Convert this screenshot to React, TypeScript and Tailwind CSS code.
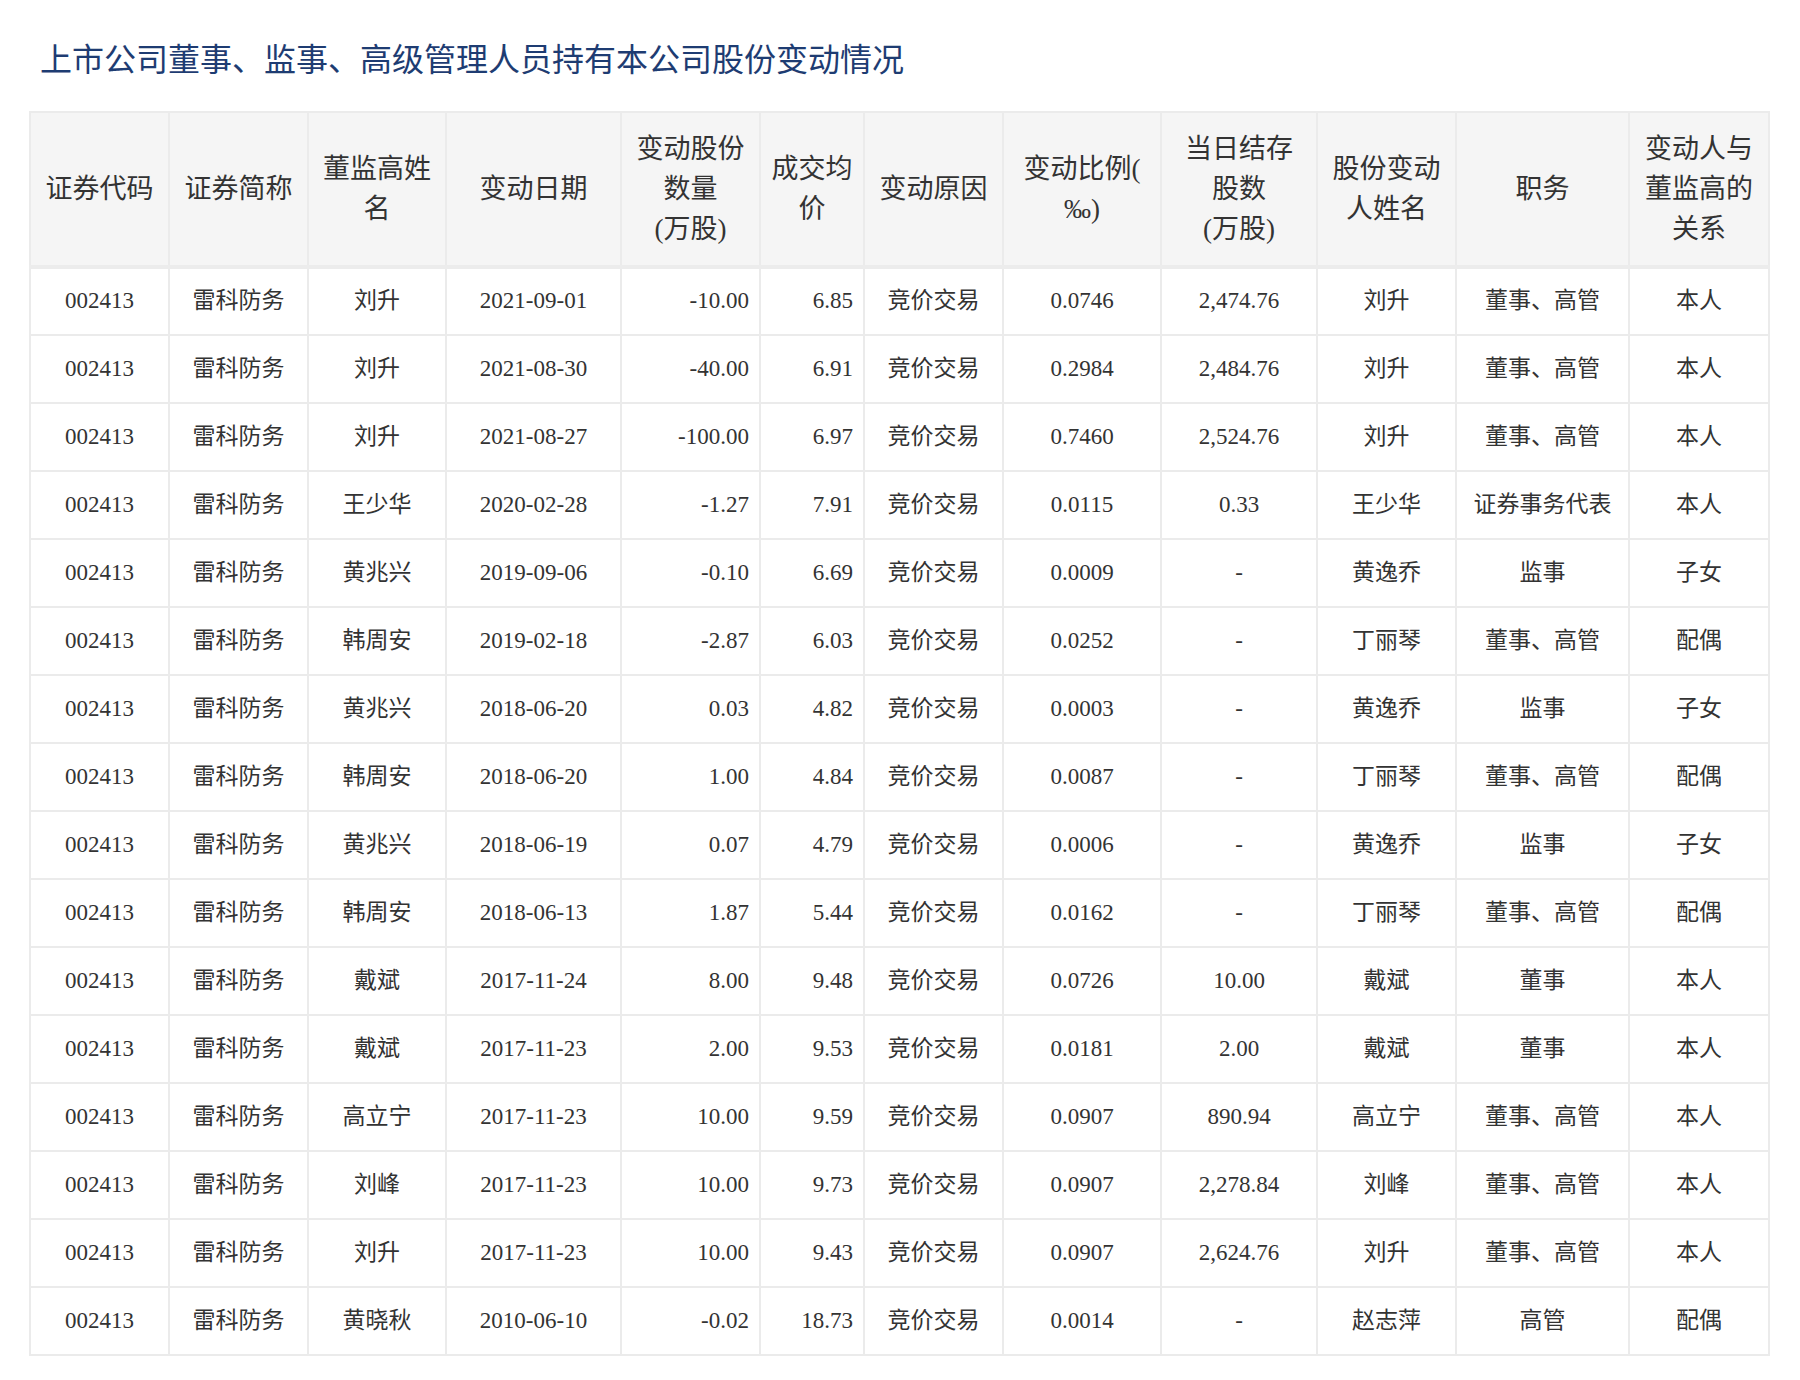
import React from 'react';

const cols = [
  { w: 'w-[139px]', h: ['证券代码'], a: 'text-center' },
  { w: 'w-[139px]', h: ['证券简称'], a: 'text-center' },
  { w: 'w-[138px]', h: ['董监高姓', '名'], a: 'text-center' },
  { w: 'w-[175px]', h: ['变动日期'], a: 'text-center' },
  { w: 'w-[139px]', h: ['变动股份', '数量', '(万股)'], a: 'text-right' },
  { w: 'w-[104px]', h: ['成交均', '价'], a: 'text-right' },
  { w: 'w-[139px]', h: ['变动原因'], a: 'text-center' },
  { w: 'w-[158px]', h: ['变动比例(', '‰)'], a: 'text-center' },
  { w: 'w-[156px]', h: ['当日结存', '股数', '(万股)'], a: 'text-center' },
  { w: 'w-[139px]', h: ['股份变动', '人姓名'], a: 'text-center' },
  { w: 'w-[173px]', h: ['职务'], a: 'text-center' },
  { w: 'w-[140px]', h: ['变动人与', '董监高的', '关系'], a: 'text-center' },
];

const raw = `刘升|2021-09-01|-10.00|6.85|0.0746|2,474.76|刘升|董事、高管|本人
刘升|2021-08-30|-40.00|6.91|0.2984|2,484.76|刘升|董事、高管|本人
刘升|2021-08-27|-100.00|6.97|0.7460|2,524.76|刘升|董事、高管|本人
王少华|2020-02-28|-1.27|7.91|0.0115|0.33|王少华|证券事务代表|本人
黄兆兴|2019-09-06|-0.10|6.69|0.0009|-|黄逸乔|监事|子女
韩周安|2019-02-18|-2.87|6.03|0.0252|-|丁丽琴|董事、高管|配偶
黄兆兴|2018-06-20|0.03|4.82|0.0003|-|黄逸乔|监事|子女
韩周安|2018-06-20|1.00|4.84|0.0087|-|丁丽琴|董事、高管|配偶
黄兆兴|2018-06-19|0.07|4.79|0.0006|-|黄逸乔|监事|子女
韩周安|2018-06-13|1.87|5.44|0.0162|-|丁丽琴|董事、高管|配偶
戴斌|2017-11-24|8.00|9.48|0.0726|10.00|戴斌|董事|本人
戴斌|2017-11-23|2.00|9.53|0.0181|2.00|戴斌|董事|本人
高立宁|2017-11-23|10.00|9.59|0.0907|890.94|高立宁|董事、高管|本人
刘峰|2017-11-23|10.00|9.73|0.0907|2,278.84|刘峰|董事、高管|本人
刘升|2017-11-23|10.00|9.43|0.0907|2,624.76|刘升|董事、高管|本人
黄晓秋|2010-06-10|-0.02|18.73|0.0014|-|赵志萍|高管|配偶`;

const rows = raw.split('\n').map((l) => {
  const p = l.split('|');
  return ['002413', '雷科防务', p[0], p[1], p[2], p[3], '竞价交易', p[4], p[5], p[6], p[7], p[8]];
});

export default function App() {
  return (
    <div
      className="w-[1800px] h-[1380px] bg-white text-[#333]"
      style={{ fontFamily: '"Liberation Serif", "Noto Sans CJK SC", serif' }}
    >
      <h1 className="pl-[40px] pt-[38px] h-[111px] text-[32px] leading-[44px] text-[#1e3c72]">
        上市公司董事、监事、高级管理人员持有本公司股份变动情况
      </h1>
      <table className="ml-[29px] border-collapse table-fixed">
        <thead>
          <tr className="bg-[#f5f5f5] h-[155px] border-b-[4px] border-[#ececec]">
            {cols.map((c, i) => (
              <th key={i} className={`${c.w} border-2 border-[#ebebeb] font-normal text-[27px] leading-[40px] text-center px-2`}>
                {c.h.map((t, j) => (
                  <div key={j}>{t}</div>
                ))}
              </th>
            ))}
          </tr>
        </thead>
        <tbody>
          {rows.map((r, i) => (
            <tr key={i} className="h-[68px]">
              {r.map((v, j) => (
                <td key={j} className={`border-2 border-[#ebebeb] text-[23px] ${cols[j].a} px-[10px]`}>
                  {v}
                </td>
              ))}
            </tr>
          ))}
        </tbody>
      </table>
    </div>
  );
}
